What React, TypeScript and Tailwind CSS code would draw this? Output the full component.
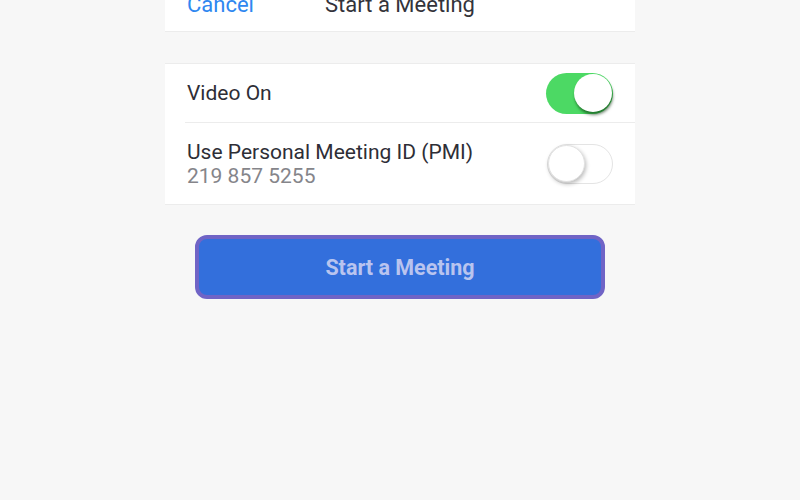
import React from "react";

function ToggleOn() {
  return (
    <div className="w-[67px] h-[41px] rounded-full bg-[#4cd964] flex items-center justify-end pr-[1px]">
      <div className="w-[38px] h-[38px] rounded-full bg-white shadow-[1px_3px_3px_rgba(0,40,0,0.55)]" />
    </div>
  );
}

function ToggleOff() {
  return (
    <div className="w-[66px] h-[40px] rounded-full bg-white border-[1.5px] border-[#e4e4e4] flex items-center justify-start">
      <div className="w-[37px] h-[37px] rounded-full bg-white shadow-[1px_2px_4px_rgba(0,0,0,0.28)] border border-[#e2e2e2]" />
    </div>
  );
}

export default function App() {
  return (
    <div
      className="w-full h-[500px] bg-[#f7f7f7] flex justify-center"
      style={{ fontFamily: "Roboto, 'Noto Sans', sans-serif" }}
    >
      <div className="w-[470px] flex flex-col">
        <div className="h-[32px] bg-white border-b border-[#ececec] overflow-hidden">
          <div className="grid grid-cols-[1fr_auto_1fr] items-center px-[22px] -mt-[8px] text-[22px] leading-[26px]">
            <span className="text-[#2f87f0]">Cancel</span>
            <span className="text-[#33333a]">Start a Meeting</span>
            <span />
          </div>
        </div>
        <div className="mt-[31px] bg-white border-y border-[#ececec]">
          <div className="h-[58px] flex items-center justify-between px-[22px]">
            <span className="text-[21px] leading-[24px] text-[#2e2e36]">Video On</span>
            <ToggleOn />
          </div>
          <div className="ml-[20px] h-px bg-[#ececec]" />
          <div className="h-[81px] flex items-center justify-between px-[22px]">
            <div className="flex flex-col text-[21px] leading-[24px]">
              <span className="text-[#2e2e36]">Use Personal Meeting ID (PMI)</span>
              <span className="text-[#85858a]">219 857 5255</span>
            </div>
            <ToggleOff />
          </div>
        </div>
        <div className="mt-[30px] mx-[30px] h-[64px] rounded-[12px] border-4 border-[#7064c6] bg-[#336fdc] flex items-center justify-center pt-[2px]">
          <span className="text-[21.5px] font-bold text-[#b9c4ef]">Start a Meeting</span>
        </div>
      </div>
    </div>
  );
}
